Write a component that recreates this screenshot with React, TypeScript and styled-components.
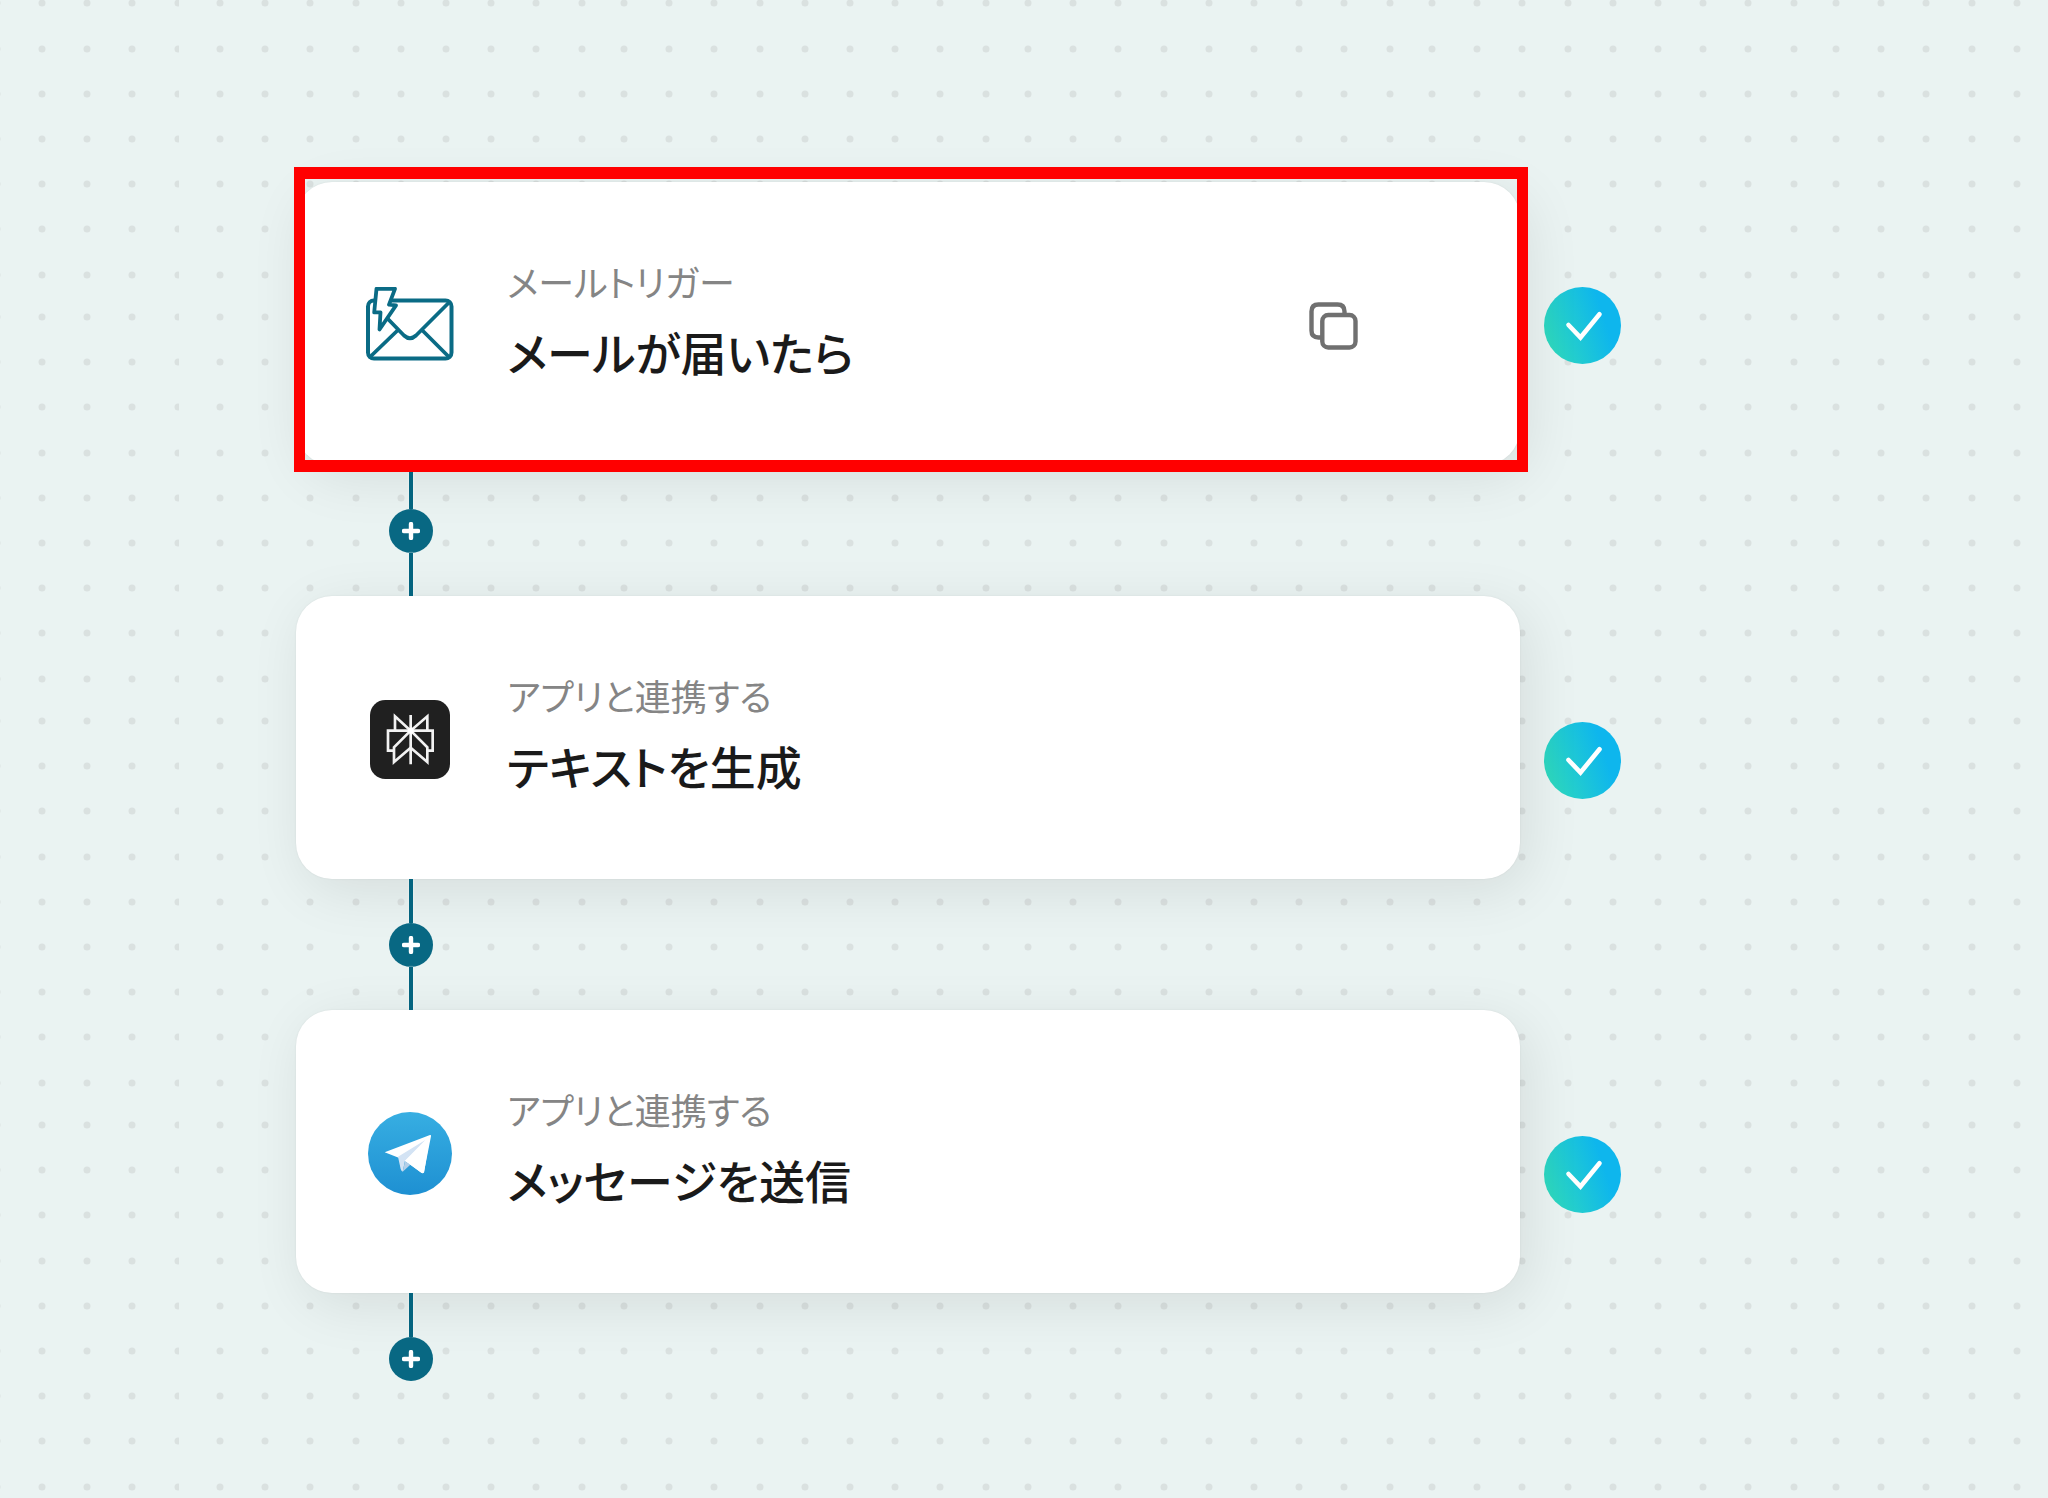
import React from "react";
import styled, { createGlobalStyle } from "styled-components";

const GlobalStyle = createGlobalStyle`
  *, *::before, *::after { box-sizing: border-box; }
  body {
    margin: 0;
    background: #eaf3f2;
    font-family: "Noto Sans CJK JP", "Noto Sans", sans-serif;
  }
`;

const Page = styled.main`
  position: relative;
  min-height: 100vh;
  padding: 182px 427px 64px 296px;
  overflow: hidden;
`;

const Backdrop = styled.svg`
  position: absolute;
  inset: 0;
  width: 100%;
  height: 100%;
`;

const Flow = styled.ol`
  position: relative;
  margin: 0;
  padding: 0;
  list-style: none;
`;

const Row = styled.div<{ $lift: number }>`
  display: flex;
  align-items: flex-end;
  gap: 24px;

  > :last-child {
    margin-bottom: ${(p) => p.$lift}px;
  }
`;

const Card = styled.article`
  position: relative;
  flex: 1;
  display: flex;
  align-items: center;
  min-height: 283px;
  padding: 0 162px 0 70px;
  border-radius: 36px;
  background: #fff;
  box-shadow: 0 0 2px rgba(0, 0, 0, 0.08), 8px 12px 56px rgba(0, 0, 0, 0.09);
`;

const Highlight = styled.span`
  position: absolute;
  z-index: 2;
  inset: -15px -8px -7px -2px;
  border: solid #f00;
  border-width: 12px 11px;
  pointer-events: none;
`;

const IconCell = styled.div`
  display: flex;
  justify-content: center;
  flex: none;
  width: 88px;
  padding-top: 4px;

  svg { display: block; }
`;

const Texts = styled.div`
  flex: 1;
  margin-left: 53px;
  padding-bottom: 5px;
  font-feature-settings: "palt";
`;

const Kind = styled.p`
  margin: 0;
  font-size: 36px;
  line-height: 60px;
  color: #858585;
`;

const Title = styled.h2`
  margin: 0;
  font-size: 46px;
  font-weight: 500;
  line-height: 80px;
  color: #1a1a1a;
`;

const CopyButton = styled.button`
  flex: none;
  margin: 4px 0 0;
  padding: 0;
  border: 0;
  background: none;
  cursor: pointer;

  svg { display: block; }
`;

const Badge = styled.svg`
  display: block;
  flex: none;
  width: 77px;
  height: 77px;
`;

const Connector = styled.div<{ $open?: boolean }>`
  position: relative;
  z-index: 1;
  display: flex;
  flex-direction: column;
  align-items: center;
  width: 44px;
  height: ${(p) => (p.$open ? 88 : 131)}px;
  margin-left: 93px;
`;

const Line = styled.span`
  flex: 1;
  width: 4px;
  background: #04647f;
  box-shadow: 0 0 2px #f8fcfc;
`;

const AddButton = styled.button`
  display: grid;
  place-items: center;
  flex: none;
  width: 44px;
  height: 44px;
  padding: 0;
  border: 0;
  border-radius: 50%;
  background: #086883;
  cursor: pointer;
`;

// The dot texture repeats as a block of 9 by 9 dots.
const steps = [0, 1, 2, 3, 4, 5, 6, 7, 8].map((n) => 4 + Math.round(n * 45.2));

function Dots() {
  return (
    <Backdrop aria-hidden="true">
      <defs>
        <pattern id="dots" x="216" y="313" width="404" height="404" patternUnits="userSpaceOnUse">
          {steps.map((y) => steps.map((x) => <circle key={`${x}-${y}`} cx={x} cy={y} r="3.5" fill="#dae1e0" />))}
        </pattern>
      </defs>
      <rect width="100%" height="100%" fill="url(#dots)" />
      <rect x="179" width="8" height="100%" fill="#eaf3f2" />
    </Backdrop>
  );
}

function MailIcon() {
  return (
    <svg width="88" height="78" viewBox="0 0 88 78" fill="none" stroke="#0a6b85" strokeWidth="3.8" strokeLinejoin="round" strokeLinecap="round" aria-hidden="true">
      <rect x="2" y="13.5" width="83.5" height="58" rx="6" strokeWidth="4" />
      <path d="M21 31 38 48.5Q44 54 50 48.5L83 15.5M32 43 4 70M56 43 83 70" />
      <path d="M10.5 1.8H29L23 17.6 30 18.4 13.5 42.5 14.5 25.4H8.2Z" fill="#fff" />
    </svg>
  );
}

function PerplexityIcon() {
  return (
    <svg width="80" height="79" viewBox="0 0 240 237" fill="none" aria-hidden="true">
      <rect width="240" height="237" rx="46" fill="#202020" />
      <g stroke="#f2f2f2" strokeWidth="8">
        <path d="M122 45V193M70 152H54V92H188V152H172" />
        <path d="M75 92V49L122 92 172 49V92" />
        <path d="M122 92 72 142V186L122 143 172 186V142Z" />
      </g>
      <circle cx="122" cy="92" r="9" fill="#fff" />
    </svg>
  );
}

function TelegramIcon() {
  return (
    <svg width="84" height="83" viewBox="0 0 252 249" aria-hidden="true">
      <defs>
        <linearGradient id="sky" x1="0" y1="0" x2="0" y2="1">
          <stop offset="0" stopColor="#37aee2" />
          <stop offset="1" stopColor="#1e90d2" />
        </linearGradient>
      </defs>
      <ellipse cx="126" cy="124.500" rx="126" ry="124.500" fill="url(#sky)" />
      <path d="M50 121 186 69Q190 68 189 73L168 180Q166 186 160 182L120 152 92 137Z" fill="#fff" />
      <path d="M90 134 172 84 111 146 104 179Q100 178 98 171Z" fill="#d3e3f4" />
      <path d="M104 179 111 148 127 158Z" fill="#b4cfe8" />
      <path d="M111 147 178 82 186 73 168 182 160 182Z" fill="#fff" />
    </svg>
  );
}

function CopyIcon() {
  return (
    <svg width="49" height="48" viewBox="0 0 49 48" fill="none" stroke="#707070" strokeWidth="4.400" aria-hidden="true">
      <path d="M13 35.500H9.500Q2.500 35.500 2.500 28.500V9.500Q2.500 2.500 9.500 2.500H28.500Q35.500 2.500 35.500 9.500V13" />
      <rect x="13.300" y="13" width="33.200" height="32.500" rx="6" />
    </svg>
  );
}

function DoneBadge() {
  return (
    <Badge viewBox="0 0 77 77" fill="none" role="img" aria-label="完了">
      <defs>
        <linearGradient id="done" x1="0.050" y1="0.700" x2="0.800" y2="0.450">
          <stop offset="0" stopColor="#2dd8bf" />
          <stop offset="1" stopColor="#0eb6ed" />
        </linearGradient>
      </defs>
      <circle cx="38.500" cy="38.500" r="38.500" fill="url(#done)" />
      <path d="M24.500 38 36.500 50.500 55.500 27.300" stroke="#fff" strokeWidth="4.600" strokeLinecap="round" />
    </Badge>
  );
}

interface Step {
  kind: string;
  title: string;
  icon: React.ReactNode;
  selected?: boolean;
}

const flowSteps: Step[] = [
  { kind: "メールトリガー", title: "メールが届いたら", icon: <MailIcon />, selected: true },
  { kind: "アプリと連携する", title: "テキストを生成", icon: <PerplexityIcon /> },
  { kind: "アプリと連携する", title: "メッセージを送信", icon: <TelegramIcon /> },
];

export default function App() {
  return (
    <>
      <GlobalStyle />
      <Page>
        <Dots />
        <Flow>
          {flowSteps.map((step, i) => (
            <li key={step.title}>
              <Row $lift={step.selected ? 101 : 80}>
                <Card>
                  <IconCell>{step.icon}</IconCell>
                  <Texts>
                    <Kind>{step.kind}</Kind>
                    <Title>{step.title}</Title>
                  </Texts>
                  {step.selected && (
                    <CopyButton type="button" aria-label="コピー">
                      <CopyIcon />
                    </CopyButton>
                  )}
                  {step.selected && <Highlight />}
                </Card>
                <DoneBadge />
              </Row>
              <Connector $open={i === flowSteps.length - 1}>
                <Line />
                <AddButton type="button" aria-label="追加">
                  <svg width="18" height="18" viewBox="0 0 18 18" stroke="#fff" strokeWidth="4.4" strokeLinecap="round" aria-hidden="true">
                    <path d="M9 2V16M2 9H16" />
                  </svg>
                </AddButton>
                {i < flowSteps.length - 1 && <Line />}
              </Connector>
            </li>
          ))}
        </Flow>
      </Page>
    </>
  );
}
